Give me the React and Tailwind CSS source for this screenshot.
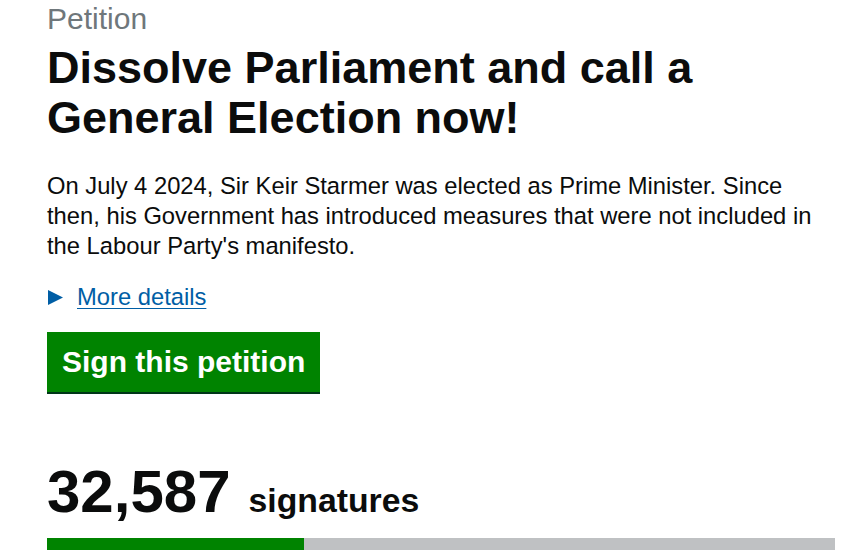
const FONT = { fontFamily: '"Liberation Sans", Arial, sans-serif' }

export default function App() {
  const count = 32587
  const threshold = 100000
  const pct = (count / threshold) * 100

  return (
    <div className="bg-white min-h-[550px] overflow-hidden text-[#0b0c0c]" style={FONT}>
      <div className="pl-[47px] w-[835px] pt-[4px]">
        <span className="block text-[30px] leading-[30px] text-[#6f777b]">Petition</span>
        <h1 className="mt-[9px] text-[45px] leading-[50px] font-bold">
          Dissolve Parliament and call a General Election now!
        </h1>

        <p className="mt-[28px] text-[23.75px] leading-[30px]">
          On July 4 2024, Sir Keir Starmer was elected as Prime Minister. Since then, his Government
          has introduced measures that were not included in the Labour Party's manifesto.
        </p>

        <div className="mt-[21px] flex items-center text-[23.75px] leading-[30px]">
          <svg width="15" height="15" viewBox="0 0 15 15" className="ml-[1px] mr-[14px]">
            <polygon points="0,0 15,7.5 0,15" fill="#005ea5" />
          </svg>
          <a href="#" className="text-[#005ea5] underline underline-offset-[3px] decoration-1">
            More details
          </a>
        </div>

        <button
          type="button"
          className="mt-[20px] block bg-[#008300] text-white font-bold text-[30px] leading-[30px] px-[15px] pt-[15px] pb-[15px] shadow-[0_2px_0_#003618]"
        >
          Sign this petition
        </button>

        <div className="mt-[70px] flex items-baseline">
          <span className="text-[60px] leading-[60px] font-bold">32,587</span>
          <span className="ml-[18px] text-[33.75px] font-bold">signatures</span>
        </div>

        <div className="mt-[12px] h-[16px] w-[788px] bg-[#bfc1c3]">
          <div className="h-full bg-[#008300]" style={{ width: `${pct}%` }} />
        </div>
      </div>
    </div>
  )
}
